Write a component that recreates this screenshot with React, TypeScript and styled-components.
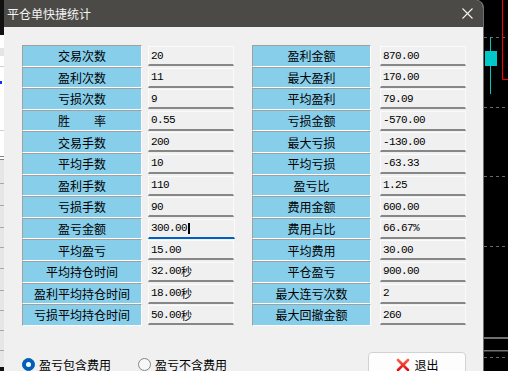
import React from "react";
import styled, { createGlobalStyle } from "styled-components";

const GlobalStyle = createGlobalStyle`
  html, body {
    margin: 0;
    padding: 0;
    width: 508px;
    height: 371px;
    overflow: hidden;
    background: #000;
  }
  * { box-sizing: border-box; }
  body {
    font-family: "Noto Sans CJK SC", "Noto Sans", sans-serif;
  }
`;

const Page = styled.div`
  display: flex;
  width: 508px;
  height: 371px;
  overflow: hidden;
`;

const SideStrip = styled.svg`
  flex: 0 0 4px;
  display: block;
`;

const Chart = styled.svg`
  flex: 0 0 24px;
  display: block;
`;

const Dialog = styled.div`
  flex: 0 0 480px;
  display: flex;
  flex-direction: column;
  height: 371px;
  border-top-right-radius: 8px;
  border-right: 1px solid #6e6e6e;
  overflow: hidden;
  background: #f0f0f0;
`;

const TitleBar = styled.div`
  flex: 0 0 27px;
  display: flex;
  align-items: center;
  background: #4b4a47;
  color: #f4f4f4;
  font-size: 12px;
  padding-left: 3px;
`;

const Title = styled.span`
  flex: 1;
  line-height: 27px;
`;

const CloseButton = styled.div`
  width: 31px;
  height: 27px;
  display: flex;
  align-items: center;
  justify-content: center;
`;

const Body = styled.div`
  flex: 1;
  display: flex;
  flex-direction: column;
  padding: 18px 16px 0 18px;
`;

const Tables = styled.div`
  display: flex;
  gap: 18px;
`;

const Table = styled.div<{ $label: number; $value: number; $gap: number }>`
  display: grid;
  grid-template-columns: ${(p) => p.$label}px ${(p) => p.$value}px;
  grid-auto-rows: 21.6px;
  column-gap: ${(p) => p.$gap}px;
`;

const Label = styled.div`
  background: #87ceeb;
  border-top: 1px solid #a0a0a0;
  border-left: 1px solid #a0a0a0;
  border-bottom: 1px solid #ffffff;
  border-right: 1px solid #ffffff;
  display: flex;
  align-items: center;
  justify-content: center;
  font-size: 12px;
  color: #000;
  white-space: pre;
`;

const ValueBox = styled.div<{ $focus?: boolean }>`
  margin-top: 1px;
  height: 20px;
  width: ${(p) => (p.$focus ? "87px" : "86px")};
  background: #f0f0f0;
  border-top: 1px solid #fbfbfb;
  border-left: 1px solid #fbfbfb;
  border-right: 1px solid #fbfbfb;
  border-bottom: 2px solid ${(p) => (p.$focus ? "#0060c0" : "#878787")};
  display: flex;
  align-items: center;
  padding-left: 2px;
  font-family: "Liberation Mono", "DejaVu Sans Mono", monospace;
  font-size: 11px;
  letter-spacing: -0.6px;
  color: #000;
`;

const Unit = styled.span`
  font-family: "Noto Sans CJK SC", sans-serif;
  font-size: 11px;
  letter-spacing: 0;
`;

const Caret = styled.span`
  display: inline-block;
  width: 2px;
  height: 11px;
  background: #000;
  margin-left: 1px;
`;

const BottomRow = styled.div`
  display: flex;
  align-items: center;
  margin-top: 26px;
  height: 26px;
`;

const RadioGroup = styled.div`
  display: flex;
  align-items: center;
  gap: 27px;
`;

const RadioOption = styled.label`
  display: flex;
  align-items: center;
  gap: 4px;
  font-size: 12px;
  color: #000;
`;

const RadioDot = styled.span<{ $checked?: boolean }>`
  width: 13px;
  height: 13px;
  border-radius: 50%;
  display: flex;
  align-items: center;
  justify-content: center;
  background: ${(p) => (p.$checked ? "#005fb8" : "#f7f7f7")};
  border: 1px solid ${(p) => (p.$checked ? "#005fb8" : "#858585")};
  &::after {
    content: "";
    display: ${(p) => (p.$checked ? "block" : "none")};
    width: 5px;
    height: 5px;
    border-radius: 50%;
    background: #fff;
  }
`;

const ExitButton = styled.div`
  margin-left: auto;
  margin-right: 1px;
  width: 98px;
  height: 26px;
  border: 1px solid #d2d2d2;
  border-radius: 4px;
  background: #fdfdfd;
  display: flex;
  align-items: center;
  justify-content: center;
  gap: 4px;
  font-size: 12px;
  color: #000;
  padding-left: 1px;
`;

type Row = { label: string; value: string; unit?: string; focus?: boolean };

const leftRows: Row[] = [
  { label: "交易次数", value: "20" },
  { label: "盈利次数", value: "11" },
  { label: "亏损次数", value: "9" },
  { label: "胜　　率", value: "0.55" },
  { label: "交易手数", value: "200" },
  { label: "平均手数", value: "10" },
  { label: "盈利手数", value: "110" },
  { label: "亏损手数", value: "90" },
  { label: "盈亏金额", value: "300.00", focus: true },
  { label: "平均盈亏", value: "15.00" },
  { label: "平均持仓时间", value: "32.00", unit: "秒" },
  { label: "盈利平均持仓时间", value: "18.00", unit: "秒" },
  { label: "亏损平均持仓时间", value: "50.00", unit: "秒" },
];

const rightRows: Row[] = [
  { label: "盈利金额", value: "870.00" },
  { label: "最大盈利", value: "170.00" },
  { label: "平均盈利", value: "79.09" },
  { label: "亏损金额", value: "-570.00" },
  { label: "最大亏损", value: "-130.00" },
  { label: "平均亏损", value: "-63.33" },
  { label: "盈亏比", value: "1.25" },
  { label: "费用金额", value: "600.00" },
  { label: "费用占比", value: "66.67%" },
  { label: "平均费用", value: "30.00" },
  { label: "平仓盈亏", value: "900.00" },
  { label: "最大连亏次数", value: "2" },
  { label: "最大回撤金额", value: "260" },
];

const StatRows: React.FC<{ rows: Row[] }> = ({ rows }) => (
  <>
    {rows.map((r) => (
      <React.Fragment key={r.label}>
        <Label>{r.label}</Label>
        <ValueBox $focus={r.focus}>
          {r.value}
          {r.unit && <Unit>{r.unit}</Unit>}
          {r.focus && <Caret />}
        </ValueBox>
      </React.Fragment>
    ))}
  </>
);

const RedX = () => (
  <svg width="14" height="14" viewBox="0 0 14 14">
    <defs>
      <linearGradient id="rx" x1="0" y1="0" x2="0" y2="1">
        <stop offset="0" stopColor="#ff5a4a" />
        <stop offset="1" stopColor="#d81010" />
      </linearGradient>
    </defs>
    <path d="M2 2 L12 12 M12 2 L2 12" stroke="url(#rx)" strokeWidth="2.6" strokeLinecap="round" />
  </svg>
);

export default function App() {
  return (
    <>
      <GlobalStyle />
      <Page>
        <SideStrip width="4" height="371" viewBox="0 0 4 371">
          <rect x="0" y="0" width="4" height="35" fill="#111" />
          <rect x="0" y="35" width="4" height="125" fill="#ffffff" />
          <rect x="0" y="48" width="4" height="8" fill="#bbb" opacity="0.4" />
          <rect x="0" y="66" width="4" height="1" fill="#cfcfcf" />
          <rect x="0" y="81" width="2" height="3" fill="#1030ff" />
          <rect x="0" y="130" width="4" height="1" fill="#cfcfcf" />
          <rect x="0" y="156" width="4" height="1" fill="#808080" />
          <rect x="0" y="159" width="4" height="1" fill="#808080" />
          <rect x="0" y="160" width="4" height="207" fill="#e6e6e6" />
          {[183, 205, 227, 247, 268, 290, 310, 330, 350].map((y) => (
            <rect key={y} x="0" y={y} width="4" height="1" fill="#a8a8a8" />
          ))}
          <rect x="0" y="367" width="4" height="4" fill="#111" />
        </SideStrip>
        <Dialog>
          <TitleBar>
            <Title>平仓单快捷统计</Title>
            <CloseButton>
              <svg width="11" height="11" viewBox="0 0 11 11">
                <path d="M0.5 0.5 L10.5 10.5 M10.5 0.5 L0.5 10.5" stroke="#f2f2f2" strokeWidth="1.1" />
              </svg>
            </CloseButton>
          </TitleBar>
          <Body>
            <Tables>
              <Table $label={120} $value={86} $gap={6}>
                <StatRows rows={leftRows} />
              </Table>
              <Table $label={119} $value={87} $gap={9}>
                <StatRows rows={rightRows} />
              </Table>
            </Tables>
            <BottomRow>
              <RadioGroup>
                <RadioOption>
                  <RadioDot $checked />
                  盈亏包含费用
                </RadioOption>
                <RadioOption>
                  <RadioDot />
                  盈亏不含费用
                </RadioOption>
              </RadioGroup>
              <ExitButton>
                <RedX />
                退出
              </ExitButton>
            </BottomRow>
          </Body>
        </Dialog>
        <Chart width="24" height="371" viewBox="0 0 24 371">
          <rect x="0" y="0" width="24" height="371" fill="#000" />
          {[37, 107, 176, 246, 357].map((y) => (
            <line key={y} x1="0" y1={y + 0.5} x2="24" y2={y + 0.5} stroke="#6a6a6a" strokeDasharray="3 3" />
          ))}
          <rect x="0" y="337" width="24" height="2" fill="#707070" />
          <rect x="0" y="350" width="24" height="1.5" fill="#707070" />
          <line x1="6.5" y1="37" x2="6.5" y2="94" stroke="#00c8c8" strokeWidth="1" />
          <rect x="1" y="51" width="12" height="15" fill="#00c8c8" />
          <path d="M18.5 0 L18.5 79.5 L24 79.5" stroke="#ff0000" strokeWidth="1" fill="none" />
        </Chart>
      </Page>
    </>
  );
}
